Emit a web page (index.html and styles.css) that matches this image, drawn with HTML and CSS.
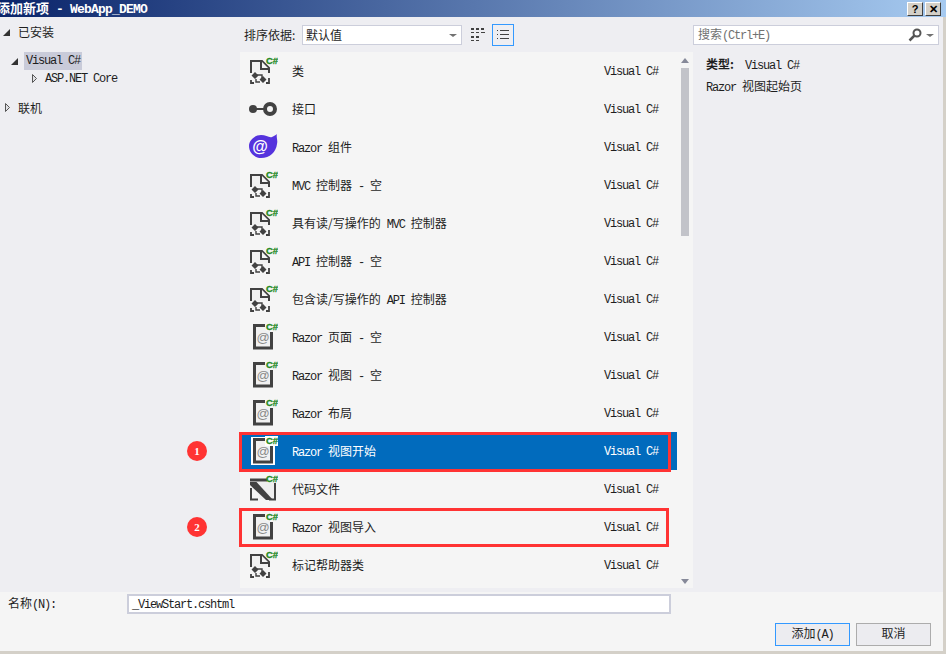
FILE: index.html
```html
<!DOCTYPE html>
<html lang="en">

<head>
    <meta charset="UTF-8">
    <title>添加新项</title>
    <link rel="stylesheet" href="styles.css">
</head>

<body>
    <svg class="defs">
        <symbol id="file-class" viewBox="0 0 30 30">
            <path d="M3 23V5H14L21 12V24" fill="#f1f1f1" stroke="#424242" stroke-width="2"/>
            <path d="M13 5V13H21" fill="#f5f5f5" stroke="#424242" stroke-width="2"/>
            <rect x="1" y="17" width="22" height="11" fill="#f5f5f5"/>
            <path d="M7 16L10.500 19.500L7 23L3.500 19.500Z M15 20L18.500 23.500L15 27L11.500 23.500Z" fill="#424242"/>
            <path d="M9 19H14V22M8 23V26H12" fill="none" stroke="#424242" stroke-width="1.400"/>
            <path d="M3 24V27H6M21 22V27H18" fill="none" stroke="#424242" stroke-width="1.800"/>
            <text class="cs" x="18" y="8">C#</text>
        </symbol>
        <symbol id="file-razor" viewBox="0 0 30 30">
            <path d="M8 5H18V9H22V25H8Z" fill="#f1f1f1"/>
            <path d="M17 3.500H6.500V26H23.500V10" fill="none" stroke="#424242" stroke-width="3"/>
            <text class="at" x="15" y="20">@</text>
            <text class="cs" x="18" y="8">C#</text>
        </symbol>
        <symbol id="file-razor-sel" viewBox="0 0 30 30">
            <rect x="3" y="1" width="24" height="28" fill="#fff"/>
            <path d="M8 5H18V9H22V25H8Z" fill="#f1f1f1"/>
            <path d="M17 3.500H6.500V26H23.500V10" fill="none" stroke="#424242" stroke-width="3"/>
            <text class="at" x="15" y="20">@</text>
            <rect x="17" y="0" width="13" height="10" fill="#fff"/>
            <text class="cs" x="18" y="8">C#</text>
        </symbol>
        <symbol id="file-code" viewBox="0 0 30 30">
            <path d="M8 8H27V25H12Z" fill="#efefef"/>
            <path d="M2 6H19" fill="none" stroke="#424242" stroke-width="3"/>
            <path d="M27 9V25.500H21M10 25.500H3V14" fill="none" stroke="#424242" stroke-width="2"/>
            <path d="M2 8H8.500L25 26H18L2 11Z" fill="#424242"/>
            <text class="cs" x="18" y="8">C#</text>
        </symbol>
        <symbol id="iface" viewBox="0 0 30 30">
            <circle cx="5" cy="15" r="4" fill="#424242"/>
            <path d="M8 15H18" stroke="#424242" stroke-width="2"/>
            <circle cx="22" cy="15" r="5" fill="none" stroke="#424242" stroke-width="4"/>
        </symbol>
        <symbol id="blazor" viewBox="0 0 30 30">
            <path d="M1 14C1 8 7 3 13 3C18 3 21 6 24 5C26 4 28 3 29 2C28 5 30 8 29 12C28 20 22 26 13 26C7 26 1 21 1 14Z" fill="#5533dd"/>
            <text class="blazor-at" x="12" y="20">@</text>
        </symbol>
        <symbol id="tri-open" viewBox="0 0 6 10">
            <path d="M.5 .5V8.500L4.500 4.500Z" fill="#e0e0e4" stroke="#555"/>
        </symbol>
    </svg>

    <div class="dialog">
        <header class="title-bar">
            <span class="title-text"><span class="zh">添加新项</span> - WebApp_DEMO</span>
            <span class="win-btns">
                <button class="win-btn">?</button>
                <button class="win-btn">✕</button>
            </span>
        </header>

        <main class="main">
            <nav class="tree">
                <div class="node"><span class="tri solid"></span><span class="zh">已安装</span></div>
                <div class="node lvl1"><span class="tri solid"></span><span class="node-sel">Visual C#</span></div>
                <div class="node lvl2"><svg class="tri-svg"><use href="#tri-open"/></svg>ASP.NET Core</div>
                <div class="node online"><svg class="tri-svg"><use href="#tri-open"/></svg><span class="zh">联机</span></div>
            </nav>

            <section class="center">
                <div class="toolbar">
                    <span class="sort-label zh">排序依据:</span>
                    <div class="sort-box"><span class="zh">默认值</span><span class="caret"></span></div>
                    <button class="view-btn">
                        <svg width="14" height="14" viewBox="0 0 14 14" fill="#424242">
                            <rect x="0" y="0" width="3" height="2"/><rect x="5" y="0" width="3" height="2"/><rect x="10" y="0" width="3" height="2"/>
                            <rect x="0" y="4" width="3" height="1"/><rect x="5" y="4" width="3" height="1"/><rect x="10" y="4" width="4" height="1"/>
                            <rect x="0" y="8" width="3" height="2"/><rect x="5" y="8" width="3" height="2"/>
                            <rect x="0" y="12" width="3" height="1"/><rect x="5" y="12" width="3" height="1"/>
                        </svg>
                    </button>
                    <button class="view-btn active">
                        <svg width="12" height="10" viewBox="0 0 12 10" fill="#424242">
                            <rect x="0" y="0" width="1" height="1"/><rect x="3" y="0" width="9" height="1"/>
                            <rect x="0" y="4" width="1" height="1"/><rect x="3" y="4" width="9" height="1"/>
                            <rect x="0" y="8" width="1" height="1"/><rect x="3" y="8" width="9" height="1"/>
                        </svg>
                    </button>
                </div>

                <div class="list">
                    <div class="rows">
                        <div class="row"><svg class="ico"><use href="#file-class"/></svg><span class="name zh">类</span><span class="lang">Visual C#</span></div>
                        <div class="row"><svg class="ico"><use href="#iface"/></svg><span class="name zh">接口</span><span class="lang">Visual C#</span></div>
                        <div class="row"><svg class="ico"><use href="#blazor"/></svg><span class="name mixed">Razor <span class="zh">组件</span></span><span class="lang">Visual C#</span></div>
                        <div class="row"><svg class="ico"><use href="#file-class"/></svg><span class="name mixed">MVC <span class="zh">控制器</span> - <span class="zh">空</span></span><span class="lang">Visual C#</span></div>
                        <div class="row"><svg class="ico"><use href="#file-class"/></svg><span class="name mixed"><span class="zh">具有读/写操作的</span> MVC <span class="zh">控制器</span></span><span class="lang">Visual C#</span></div>
                        <div class="row"><svg class="ico"><use href="#file-class"/></svg><span class="name mixed">API <span class="zh">控制器</span> - <span class="zh">空</span></span><span class="lang">Visual C#</span></div>
                        <div class="row"><svg class="ico"><use href="#file-class"/></svg><span class="name mixed"><span class="zh">包含读/写操作的</span> API <span class="zh">控制器</span></span><span class="lang">Visual C#</span></div>
                        <div class="row"><svg class="ico"><use href="#file-razor"/></svg><span class="name mixed">Razor <span class="zh">页面</span> - <span class="zh">空</span></span><span class="lang">Visual C#</span></div>
                        <div class="row"><svg class="ico"><use href="#file-razor"/></svg><span class="name mixed">Razor <span class="zh">视图</span> - <span class="zh">空</span></span><span class="lang">Visual C#</span></div>
                        <div class="row"><svg class="ico"><use href="#file-razor"/></svg><span class="name mixed">Razor <span class="zh">布局</span></span><span class="lang">Visual C#</span></div>
                        <div class="row selected"><svg class="ico"><use href="#file-razor-sel"/></svg><span class="name mixed">Razor <span class="zh">视图开始</span></span><span class="lang">Visual C#</span></div>
                        <div class="row"><svg class="ico"><use href="#file-code"/></svg><span class="name zh">代码文件</span><span class="lang">Visual C#</span></div>
                        <div class="row"><svg class="ico"><use href="#file-razor"/></svg><span class="name mixed">Razor <span class="zh">视图导入</span></span><span class="lang">Visual C#</span></div>
                        <div class="row"><svg class="ico"><use href="#file-class"/></svg><span class="name zh">标记帮助器类</span><span class="lang">Visual C#</span></div>
                    </div>
                    <div class="scrollbar">
                        <span class="arrow up"></span>
                        <span class="thumb"></span>
                        <span class="arrow down"></span>
                    </div>

                    <span class="mark mark-1"></span>
                    <span class="mark mark-2"></span>
                    <span class="badge badge-1">1</span>
                    <span class="badge badge-2">2</span>
                </div>
            </section>

            <aside class="side">
                <div class="search">
                    <span class="search-text"><span class="zh">搜索</span>(Ctrl+E)</span>
                    <svg class="search-ico" width="14" height="14" viewBox="0 0 14 14">
                        <circle cx="9" cy="5" r="3.500" fill="none" stroke="#555" stroke-width="2"/>
                        <path d="M6.500 7.500L1.500 12.500" stroke="#555" stroke-width="2.500"/>
                    </svg>
                    <span class="caret"></span>
                </div>
                <div class="detail">
                    <p class="detail-type"><strong class="zh">类型:</strong><span>Visual C#</span></p>
                    <p>Razor <span class="zh">视图起始页</span></p>
                </div>
            </aside>
        </main>

        <footer class="footer">
            <div class="name-row">
                <label class="name-label"><span class="zh">名称</span>(N):</label>
                <div class="name-input">_ViewStart.cshtml</div>
            </div>
            <div class="actions">
                <button class="btn primary"><span class="zh">添加</span>(A)</button>
                <button class="btn"><span class="zh">取消</span></button>
            </div>
        </footer>
    </div>
</body>

</html>
```

FILE: styles.css
```css
html,
body {
    margin: 0;
    padding: 0;
}

body {
    width: 946px;
    height: 654px;
    overflow: hidden;
    color: #1e1e1e;
    font-family: "Liberation Mono", "Noto Sans CJK SC", monospace;
    font-size: 12px;
    letter-spacing: -1.2px;
}

.zh {
    font-family: "Noto Sans CJK SC", sans-serif;
    letter-spacing: 0;
    line-height: 1;
}

.defs {
    display: none;
}

.cs {
    fill: #1f8a1f;
    stroke: #1f8a1f;
    stroke-width: 0.3px;
    font-family: "Liberation Sans", sans-serif;
    font-size: 9.5px;
    font-weight: bold;
    letter-spacing: 0;
}

.at {
    fill: #8a8a8a;
    font-family: "Liberation Sans", sans-serif;
    font-size: 13px;
    text-anchor: middle;
    letter-spacing: 0;
}

.blazor-at {
    fill: #fff;
    font-family: "Liberation Sans", sans-serif;
    font-size: 16px;
    font-weight: bold;
    text-anchor: middle;
    letter-spacing: 0;
}

.dialog {
    display: flex;
    flex-direction: column;
    height: 654px;
    box-sizing: border-box;
    border-right: 3px solid #d4d0c8;
    border-bottom: 3px solid #d4d0c8;
    background-color: #eeeef2;
}

/* title bar */
.title-bar {
    display: flex;
    justify-content: space-between;
    align-items: center;
    height: 17px;
    margin-right: -3px;
    margin-bottom: 1px;
    padding-right: 5px;
    background: linear-gradient(to right, #0a246a, #a6caf0);
    color: #fff;
    font-size: 13px;
    font-weight: bold;
    letter-spacing: -0.8px;
}

.title-text {
    margin-left: -3px;
}

.title-text .zh {
    font-size: 13px;
    font-weight: bold;
}

.win-btns {
    display: flex;
    gap: 2px;
}

.win-btn {
    width: 16px;
    height: 14px;
    padding: 0;
    border: 1px solid;
    border-color: #fff #404040 #404040 #fff;
    background-color: #d4d0c8;
    color: #000;
    font: bold 11px/12px "Liberation Sans", sans-serif;
}

/* three panes */
.main {
    display: flex;
    flex: 1;
    min-height: 0;
    padding-bottom: 4px;
}

.tree {
    width: 240px;
    padding-top: 5px;
    box-sizing: border-box;
}

.node {
    display: flex;
    align-items: center;
    height: 18px;
    padding-left: 3px;
}

.node.lvl1 {
    margin-top: 11px;
    padding-left: 11px;
}

.node.lvl2 {
    padding-left: 32px;
}

.node.online {
    margin-top: 11px;
    padding-left: 5px;
}

.node-sel {
    display: block;
    margin-left: -2px;
    padding: 0 2px;
    line-height: 18px;
    background-color: #c9cbd9;
}

.tri {
    flex: none;
    width: 0;
    height: 0;
}

.tri.solid {
    border-bottom: 7px solid #333;
    border-left: 7px solid transparent;
    margin-right: 8px;
}

.tri-svg {
    flex: none;
    width: 6px;
    height: 10px;
    margin-right: 7px;
}

.center {
    display: flex;
    flex-direction: column;
    width: 453px;
}

.toolbar {
    display: flex;
    align-items: center;
    height: 34px;
    flex: none;
    padding-left: 4px;
    box-sizing: border-box;
}

.sort-label {
    width: 58px;
}

.sort-box {
    display: flex;
    justify-content: space-between;
    align-items: center;
    box-sizing: border-box;
    width: 160px;
    height: 20px;
    margin-right: 6px;
    padding: 0 4px 0 3px;
    border: 1px solid #cccedb;
    background-color: #fff;
}

.caret {
    width: 0;
    height: 0;
    border-top: 3px solid #717171;
    border-left: 4px solid transparent;
    border-right: 4px solid transparent;
}

.view-btn {
    display: flex;
    justify-content: center;
    align-items: center;
    box-sizing: border-box;
    width: 20px;
    height: 22px;
    margin-right: 4px;
    padding: 0;
    border: 1px solid transparent;
    background: none;
}

.view-btn.active {
    width: 22px;
    border-color: #3399ff;
}

.list {
    display: flex;
    flex: 1;
    min-height: 0;
    position: relative;
    background-color: #f5f5f5;
}

.rows {
    flex: 1;
    overflow: hidden;
}

.row {
    display: flex;
    align-items: center;
    height: 38px;
}

.row.selected {
    background-color: #016bbd;
    color: #fff;
}

.ico {
    flex: none;
    width: 30px;
    height: 30px;
    margin: 0 14px 0 8px;
}

.name {
    flex: 1;
    white-space: pre;
}

.name.mixed {
    margin-top: 2px;
}

.lang {
    width: 55px;
    margin: 2px 18px 0 0;
    white-space: pre;
}

.scrollbar {
    display: flex;
    flex-direction: column;
    align-items: center;
    flex: none;
    width: 16px;
}

.thumb {
    width: 8px;
    height: 168px;
    background-color: #c2c3c9;
}

.arrow {
    width: 0;
    height: 0;
    border-left: 4px solid transparent;
    border-right: 4px solid transparent;
}

.arrow.up {
    margin: 6px 0 5px;
    border-bottom: 5px solid #868999;
}

.arrow.down {
    margin-top: auto;
    margin-bottom: 4px;
    border-top: 5px solid #868999;
}

/* red annotations lying over the list */
.mark {
    position: absolute;
    left: -1px;
    box-sizing: border-box;
    border: 3px solid #ff3333;
}

.mark-1 {
    top: 380px;
    width: 432px;
    height: 40px;
}

.mark-2 {
    top: 456px;
    width: 430px;
    height: 39px;
}

.badge {
    position: absolute;
    left: -53px;
    width: 20px;
    height: 20px;
    border-radius: 50%;
    background-color: #ff3333;
    color: #fff;
    font: bold 11px/20px "Liberation Serif", serif;
    letter-spacing: 0;
    text-align: center;
}

.badge-1 {
    top: 389px;
}

.badge-2 {
    top: 465px;
}

.side {
    flex: 1;
}

.search {
    display: flex;
    align-items: center;
    box-sizing: border-box;
    width: 246px;
    height: 20px;
    margin-top: 7px;
    padding: 0 4px;
    border: 1px solid #cccedb;
    background-color: #fff;
    color: #717171;
}

.search-text {
    flex: 1;
}

.search-ico {
    margin-right: 4px;
}

.detail {
    padding: 10px 0 0 13px;
}

.detail p {
    margin: 0;
    height: 22px;
    line-height: 22px;
    white-space: pre;
}

.detail-type strong {
    margin-right: 11px;
}

/* bottom bar */
.footer {
    flex: none;
    display: flex;
    flex-direction: column;
    height: 59px;
    box-sizing: border-box;
    padding: 2px 12px 5px 8px;
    background-color: #f5f5f5;
}

.name-row {
    display: flex;
    align-items: center;
}

.name-label {
    width: 119px;
    padding-top: 1px;
}

.name-input {
    box-sizing: border-box;
    width: 544px;
    height: 20px;
    padding-left: 3px;
    border: 2px solid #cccedb;
    background-color: #fff;
    line-height: 18px;
}

.actions {
    display: flex;
    justify-content: flex-end;
    gap: 6px;
    margin-top: auto;
}

.btn {
    width: 75px;
    height: 23px;
    padding: 0 0 1px;
    border: 1px solid #acacac;
    background-color: #ececf0;
    color: #1e1e1e;
    font: inherit;
    letter-spacing: inherit;
}

.btn.primary {
    border-color: #3399ff;
}
```
